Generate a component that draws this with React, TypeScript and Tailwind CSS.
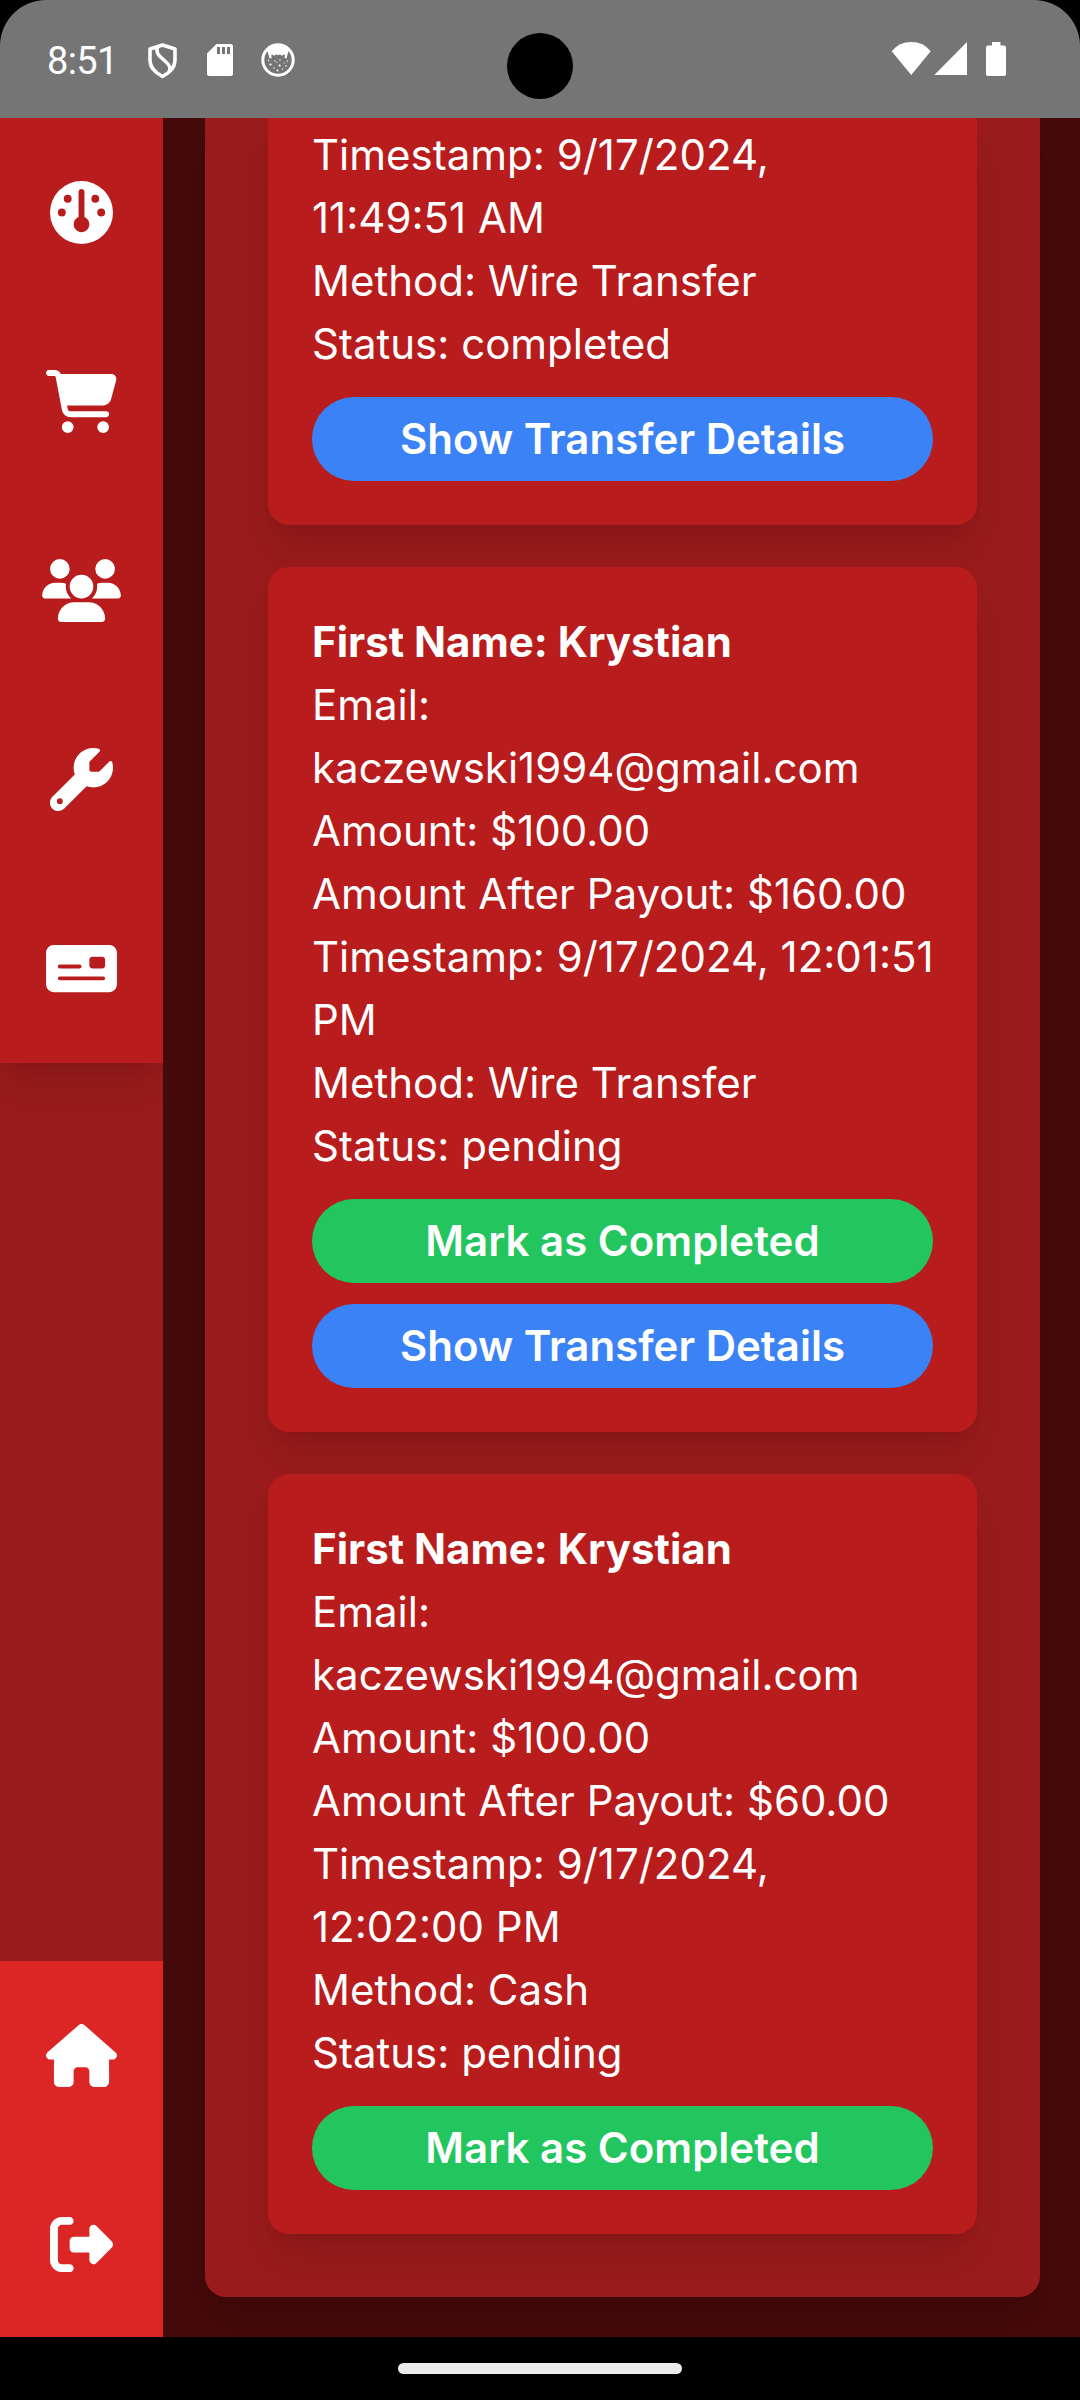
import type { IconType } from "react-icons";
import {
  FaGauge,
  FaCartShopping,
  FaUsers,
  FaWrench,
  FaMoneyCheck,
  FaHouse,
  FaRightFromBracket,
} from "react-icons/fa6";

function NavItem({ icon: Icon, label, width }: { icon: IconType; label: string; width: string }) {
  return (
    <a aria-label={label} className="flex h-[189px] w-full shrink-0 items-center justify-center">
      <Icon className={`h-[63px] shrink-0 ${width}`} />
    </a>
  );
}

function StatusBar() {
  return (
    <div className="h-[118px] shrink-0 bg-black">
      <div className="relative flex h-full items-start justify-between rounded-t-[46px] bg-[#757575] pr-[74px] pl-[47px] text-white">
        <div className="flex items-start">
          <span className="mt-[38px] w-[100px] font-['Roboto',sans-serif] text-[38px] leading-[46px] tracking-[-0.6px]">8:51</span>
          <svg className="mt-[43px] h-[36px] w-[31px]" viewBox="0 0 31 36" fill="none" stroke="currentColor" strokeWidth="3.6" strokeLinejoin="round">
            <path d="M15.500 2 28 6V17.500c0 6.500-5 12-12.500 16C8 29.500 3 24 3 17.500V6Z" />
            <path d="M10.500 4C9 8 10 10.500 13 13.500l6 5.500c4 3.500 4.500 5.500 3.500 9" />
          </svg>
          <svg className="mt-[44px] ml-[29px] h-[32px] w-[26px]" viewBox="0 0 26 32" fill="currentColor">
            <path fillRule="evenodd" d="M9.500 0H23.500Q26 0 26 2.500V29.500Q26 32 23.500 32H2.500Q0 32 0 29.500V9.500ZM10 3V10H13V3ZM15 3V10H18V3ZM20 3V10H23V3Z" />
          </svg>
          <svg className="mt-[43px] ml-[28px] h-[34px] w-[34px]" viewBox="0 0 34 34" fill="currentColor">
            <circle cx="17" cy="17" r="15.200" fill="none" stroke="currentColor" strokeWidth="3" />
            <path d="M6 7Q11 1.500 17 1.500T28 7L26.500 11.500 25.500 15.500 23.500 15 24 12 22 11.500 21 13 19.500 11.500Q17 12.300 14.500 11.500L13 13 12 11.500 10.300 12 10.700 15 8.500 15.500 7.500 11.500Z" />
            <g>
              <circle cx="14" cy="18" r=".7" /><circle cx="19" cy="17" r=".7" /><circle cx="9.500" cy="21.500" r="1.100" />
              <circle cx="16" cy="19.500" r=".6" /><circle cx="18.700" cy="22.500" r="1.100" /><circle cx="23" cy="20" r=".6" />
              <circle cx="26.500" cy="18" r=".7" /><circle cx="13" cy="25" r=".7" /><circle cx="21.500" cy="26" r=".7" />
              <circle cx="16.500" cy="27.500" r="1" /><circle cx="25" cy="23" r=".8" /><circle cx="7.500" cy="17.500" r=".7" />
            </g>
          </svg>
        </div>
        <div className="absolute top-[33px] left-[507px] size-[66px] rounded-full bg-black" />
        <svg className="mt-[42px] h-[34px] w-[115px]" viewBox="0 0 115 34" fill="currentColor">
          <path d="M0.700 9.300Q8 0 20.200 0T39.700 9.300L20.200 33Z" />
          <path d="M43.300 33 76 0V33Z" />
          <path d="M101 0h8.500v3.500h3.500Q115 3.500 115 5.500V32q0 2-2 2H97q-2 0-2-2V5.500q0-2 2-2h4Z" />
        </svg>
      </div>
    </div>
  );
}

function Sidebar() {
  return (
    <aside className="flex w-[163px] shrink-0 flex-col justify-between overflow-hidden bg-[#991b1b] text-white">
      <nav className="bg-[#b91c1c] shadow-[0_26px_39px_-8px_rgba(0,0,0,0.1),0_10px_16px_-10px_rgba(0,0,0,0.1)]">
        <NavItem icon={FaGauge} label="Dashboard" width="w-[63px]" />
        <NavItem icon={FaCartShopping} label="Orders" width="w-[71px]" />
        <NavItem icon={FaUsers} label="Users" width="w-[79px]" />
        <NavItem icon={FaWrench} label="Tools" width="w-[63px]" />
        <NavItem icon={FaMoneyCheck} label="Payouts" width="w-[71px]" />
      </nav>
      <nav className="h-[376px] bg-[#dc2626]">
        <NavItem icon={FaHouse} label="Home" width="w-[71px]" />
        <NavItem icon={FaRightFromBracket} label="Log out" width="w-[63px]" />
      </nav>
    </aside>
  );
}

interface Payout {
  name?: string;
  lines: string[];
  pending?: boolean;
  transfer?: boolean;
}

const payouts: Payout[] = [
  {
    lines: ["Timestamp: 9/17/2024,", "11:49:51 AM", "Method: Wire Transfer", "Status: completed"],
    transfer: true,
  },
  {
    name: "Krystian",
    lines: [
      "Email:",
      "kaczewski1994@gmail.com",
      "Amount: $100.00",
      "Amount After Payout: $160.00",
      "Timestamp: 9/17/2024, 12:01:51",
      "PM",
      "Method: Wire Transfer",
      "Status: pending",
    ],
    pending: true,
    transfer: true,
  },
  {
    name: "Krystian",
    lines: [
      "Email:",
      "kaczewski1994@gmail.com",
      "Amount: $100.00",
      "Amount After Payout: $60.00",
      "Timestamp: 9/17/2024,",
      "12:02:00 PM",
      "Method: Cash",
      "Status: pending",
    ],
    pending: true,
  },
];

function PayoutCard({ payout }: { payout: Payout }) {
  const shape = payout.name ? "rounded-[21px] pt-[43px]" : "rounded-b-[21px] pt-[5px]";
  return (
    <article
      className={`${shape} bg-[#b91c1c] px-[44px] pb-[44px] shadow-[0_26px_39px_-8px_rgba(0,0,0,0.1),0_10px_16px_-10px_rgba(0,0,0,0.1)]`}
    >
      <div className="text-[42px] leading-[63px] whitespace-nowrap">
        {payout.name && <p className="font-bold">First Name: {payout.name}</p>}
        {payout.lines.map((line) => (
          <p key={line}>{line}</p>
        ))}
      </div>
      <div className="mt-[22px] flex flex-col gap-[21px] text-[42px] leading-[63px] font-semibold">
        {payout.pending && <button className="h-[84px] rounded-full bg-[#22c55e] pb-[2px]">Mark as Completed</button>}
        {payout.transfer && <button className="h-[84px] rounded-full bg-[#3b82f6] pb-[2px]">Show Transfer Details</button>}
      </div>
    </article>
  );
}

export default function App() {
  return (
    <div className="flex h-[2400px] w-[1080px] flex-col overflow-hidden bg-black font-['Inter',sans-serif]">
      <StatusBar />
      <div className="flex h-[2219px] shrink-0 overflow-hidden bg-[#450a0a]">
        <Sidebar />
        <main className="flex-1 overflow-hidden pr-[40px] pl-[42px] text-white">
          <section className="flex h-[2179px] flex-col gap-[42px] rounded-b-[21px] bg-[#991b1b] px-[63px] pb-[63px] shadow-[0_26px_39px_-8px_rgba(0,0,0,0.1),0_10px_16px_-10px_rgba(0,0,0,0.1)]">
            {payouts.map((payout, i) => (
              <PayoutCard key={i} payout={payout} />
            ))}
          </section>
        </main>
      </div>
      <div className="flex h-[63px] shrink-0 items-center justify-center">
        <div className="h-[11px] w-[284px] rounded-full bg-[#ebebeb]" />
      </div>
    </div>
  );
}
